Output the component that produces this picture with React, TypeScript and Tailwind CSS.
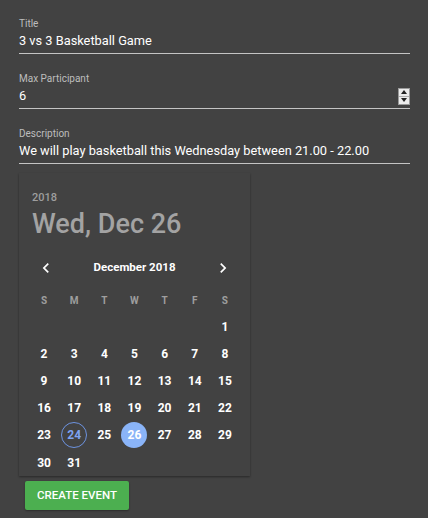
import React from "react";

const weekDays = ["S", "M", "T", "W", "T", "F", "S"];

// December 2018 starts on a Saturday
const days: (number | null)[] = [
  null, null, null, null, null, null,
  ...Array.from({ length: 31 }, (_, i) => i + 1),
];

interface FieldProps {
  label: string;
  value: string;
  spinner?: boolean;
}

const Field: React.FC<FieldProps> = ({ label, value, spinner }) => (
  <div className="mt-[18px] first:mt-0">
    <div className="text-[10px] leading-[14px] text-[#bdbdbd]">{label}</div>
    <div className="mt-[2px] flex items-center border-b border-[#c4c4c4] pb-[4px]">
      <div className="flex-1 text-[12.8px] leading-[16px] text-white">{value}</div>
      {spinner && (
        <div className="flex h-[17px] w-[12px] -my-[1px] flex-col border border-[#9a9a9a] bg-[#ececec]">
          <div className="flex flex-1 items-center justify-center border-b border-[#b0b0b0]">
            <div className="h-0 w-0 border-x-[3px] border-b-[4px] border-x-transparent border-b-[#222]" />
          </div>
          <div className="flex flex-1 items-center justify-center">
            <div className="h-0 w-0 border-x-[3px] border-t-[4px] border-x-transparent border-t-[#222]" />
          </div>
        </div>
      )}
    </div>
  </div>
);

const Chevron: React.FC<{ dir: "left" | "right" }> = ({ dir }) => (
  <svg width="20" height="20" viewBox="0 0 24 24" fill="#ffffff">
    {dir === "left" ? (
      <path d="M15.41 7.41 14 6l-6 6 6 6 1.41-1.41L10.83 12z" />
    ) : (
      <path d="M10 6 8.59 7.41 13.17 12l-4.58 4.59L10 18l6-6z" />
    )}
  </svg>
);

const App: React.FC = () => {
  return (
    <div
      className="min-h-[518px] bg-[#424242] px-[19px] pt-[17px]"
      style={{ fontFamily: "Roboto, 'Liberation Sans', sans-serif" }}
    >
      <div className="w-[391px]">
        <Field label="Title" value="3 vs 3 Basketball Game" />
        <Field label="Max Participant" value="6" spinner />
        <Field
          label="Description"
          value="We will play basketball this Wednesday between 21.00 - 22.00"
        />
      </div>

      <div className="mt-[9px] w-[231px] bg-[#424242] shadow-[0_1px_2px_rgba(0,0,0,0.4)]">
        <div className="px-[13px] pt-[18px]">
          <div className="text-[11px] font-medium leading-[14px] text-[#9e9e9e]">2018</div>
          <div className="mt-[3px] text-[27px] font-medium leading-[32px] text-[#a3a3a3]">
            Wed, Dec 26
          </div>
        </div>

        <div className="mt-[18px] flex items-center justify-between px-[17px]">
          <Chevron dir="left" />
          <div className="text-[11.5px] font-bold text-white">December 2018</div>
          <Chevron dir="right" />
        </div>

        <div className="mt-[14px] grid grid-cols-7 px-[10px]">
          {weekDays.map((d, i) => (
            <div
              key={i}
              className="flex h-[16px] items-center justify-center text-[10px] font-bold text-[#9e9e9e]"
            >
              {d}
            </div>
          ))}
        </div>

        <div className="mt-[5px] grid grid-cols-7 px-[10px]">
          {days.map((d, i) => (
            <div key={i} className="flex h-[27.2px] items-center justify-center">
              {d !== null && (
                <div
                  className={
                    d === 24
                      ? "flex h-[26px] w-[26px] items-center justify-center rounded-full border border-[#6d93e0] text-[12px] font-bold text-[#7ea3f2]"
                      : d === 26
                      ? "flex h-[26px] w-[26px] items-center justify-center rounded-full bg-[#8ab4f8] text-[12px] font-bold text-white"
                      : "flex h-[26px] w-[26px] items-center justify-center text-[12px] font-bold text-white"
                  }
                >
                  {d}
                </div>
              )}
            </div>
          ))}
        </div>
      </div>

      <button className="ml-[6px] mt-[5px] h-[29px] w-[104px] rounded-[2px] bg-[#4caf50] text-[11.5px] font-medium uppercase text-white shadow-[0_1px_2px_rgba(0,0,0,0.35)]">
        Create Event
      </button>
    </div>
  );
};

export default App;
